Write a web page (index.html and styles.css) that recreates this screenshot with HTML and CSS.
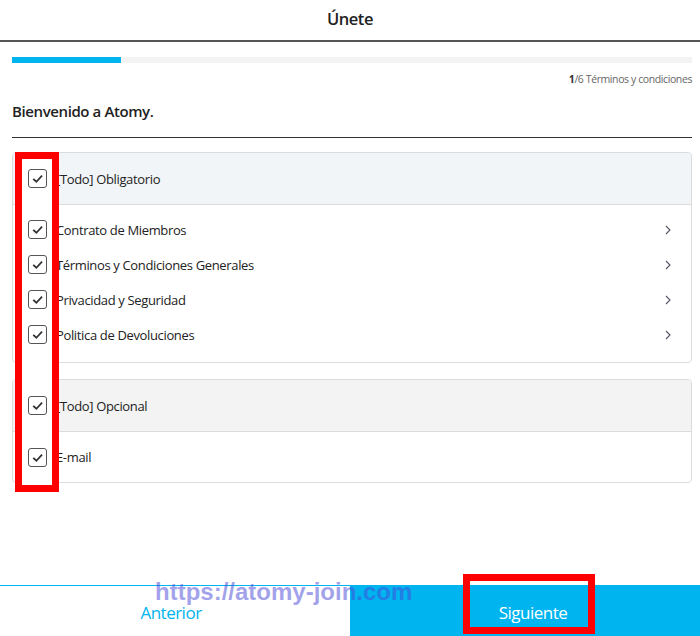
FILE: index.html
```html
<!DOCTYPE html>
<html lang="es">
<head>
<meta charset="UTF-8">
<meta name="viewport" content="width=device-width, initial-scale=1.0">
<title>Únete</title>
<link rel="stylesheet" href="styles.css">
</head>
<body>

<div class="page">
    <header class="top-bar">Únete</header>

    <div class="content">
        <div class="progress">
            <div class="progress-fill"></div>
        </div>
        <div class="step"><b>1</b>/6 Términos y condiciones</div>

        <h1 class="welcome">Bienvenido a Atomy.</h1>

        <div class="terms">
            <div class="mark-box"></div>

            <div class="card">
                <div class="card-head head-blue">
                    <span class="check"><svg viewBox="0 0 12 12"><path d="M3 6.2 L5.2 8.3 L9.2 4"/></svg></span>
                    <span>[Todo] Obligatorio</span>
                </div>
                <ul class="card-body">
                    <li>
                        <span class="check"><svg viewBox="0 0 12 12"><path d="M3 6.2 L5.2 8.3 L9.2 4"/></svg></span>
                        <span class="label">Contrato de Miembros</span>
                        <svg class="chevron" viewBox="0 0 6 10"><path d="M1 1 L5 5 L1 9"/></svg>
                    </li>
                    <li>
                        <span class="check"><svg viewBox="0 0 12 12"><path d="M3 6.2 L5.2 8.3 L9.2 4"/></svg></span>
                        <span class="label">Términos y Condiciones Generales</span>
                        <svg class="chevron" viewBox="0 0 6 10"><path d="M1 1 L5 5 L1 9"/></svg>
                    </li>
                    <li>
                        <span class="check"><svg viewBox="0 0 12 12"><path d="M3 6.2 L5.2 8.3 L9.2 4"/></svg></span>
                        <span class="label">Privacidad y Seguridad</span>
                        <svg class="chevron" viewBox="0 0 6 10"><path d="M1 1 L5 5 L1 9"/></svg>
                    </li>
                    <li>
                        <span class="check"><svg viewBox="0 0 12 12"><path d="M3 6.2 L5.2 8.3 L9.2 4"/></svg></span>
                        <span class="label">Politica de Devoluciones</span>
                        <svg class="chevron" viewBox="0 0 6 10"><path d="M1 1 L5 5 L1 9"/></svg>
                    </li>
                </ul>
            </div>

            <div class="card">
                <div class="card-head head-grey">
                    <span class="check"><svg viewBox="0 0 12 12"><path d="M3 6.2 L5.2 8.3 L9.2 4"/></svg></span>
                    <span>[Todo] Opcional</span>
                </div>
                <ul class="card-body single">
                    <li>
                        <span class="check"><svg viewBox="0 0 12 12"><path d="M3 6.2 L5.2 8.3 L9.2 4"/></svg></span>
                        <span class="label">E-mail</span>
                    </li>
                </ul>
            </div>
        </div>
    </div>

    <footer class="bottom-bar">
        <button class="btn-prev" type="button">Anterior</button>
        <button class="btn-next" type="button">Siguiente</button>
        <div class="watermark">https://atomy-join.com</div>
        <div class="mark-btn"></div>
    </footer>
</div>

</body>
</html>
```

FILE: styles.css
```css
body {
    margin: 0;
    padding: 0;
    background: #fff;
    font-family: 'Open Sans', 'Noto Sans', sans-serif;
    color: #222;
}

.page {
    width: 700px;
    height: 636px;
    display: flex;
    flex-direction: column;
    position: relative;
    overflow: hidden;
}

.top-bar {
    height: 40px;
    line-height: 38px;
    text-align: center;
    font-size: 16.5px;
    font-weight: 600;
    letter-spacing: -0.5px;
    color: #222;
    border-bottom: 2px solid #555;
}

.content {
    flex: 1;
    padding: 15px 8px 0 12px;
}

.progress {
    height: 6px;
    background-color: #f3f3f3;
}

.progress-fill {
    width: 109px;
    height: 100%;
    background-color: #00b4ef;
}

.step {
    text-align: right;
    font-size: 10.5px;
    letter-spacing: -0.4px;
    color: #666;
    margin-top: 9px;
}

.step b {
    color: #333;
}

.welcome {
    margin: 15px 0 0;
    padding-bottom: 16px;
    font-size: 15px;
    font-weight: 600;
    letter-spacing: -0.4px;
    color: #222;
    border-bottom: 1.5px solid #333;
}

.terms {
    position: relative;
    margin-top: 14px;
    display: flex;
    flex-direction: column;
    gap: 16px;
}

.card {
    border: 1px solid #dcdcdc;
    border-radius: 4px;
    overflow: hidden;
}

.card-head {
    height: 51px;
    display: flex;
    align-items: center;
    font-size: 13px;
    letter-spacing: -0.35px;
    color: #222;
    border-bottom: 1px solid #dcdcdc;
}

.head-blue {
    background-color: #f2f5f8;
}

.head-grey {
    background-color: #f3f3f3;
}

.card-body {
    list-style: none;
    margin: 0;
    padding: 7px 0 10px;
}

.card-body li {
    height: 35px;
    display: flex;
    align-items: center;
    font-size: 13px;
    letter-spacing: -0.35px;
    color: #222;
}

.card-body.single {
    padding: 0;
}

.card-body.single li {
    height: 50px;
}

.label {
    flex: 1;
}

.check {
    position: relative;
    z-index: 2;
    width: 17px;
    height: 17px;
    margin: 0 9px 0 15px;
    border: 1.5px solid #555;
    border-radius: 3px;
    background: #fff;
    display: flex;
    align-items: center;
    justify-content: center;
    flex-shrink: 0;
}

.check svg {
    width: 17px;
    height: 17px;
    fill: none;
    stroke: #333;
    stroke-width: 1.25;
}

.chevron {
    width: 6px;
    height: 10px;
    margin-right: 20px;
    fill: none;
    stroke: #556;
    stroke-width: 1.1;
}

.mark-box {
    position: absolute;
    z-index: 1;
    left: 3px;
    top: 0;
    width: 30px;
    height: 326px;
    border: 7px solid #ff0000;
    background: #fff;
}

.bottom-bar {
    height: 50px;
    display: flex;
    position: relative;
    border-top: 1px solid #00b4ef;
}

.bottom-bar button {
    flex: 0 0 50%;
    box-sizing: border-box;
    border: none;
    font-family: 'Open Sans', 'Noto Sans', sans-serif;
    font-size: 17px;
    line-height: 17px;
    letter-spacing: -0.5px;
    padding-top: 4px;
}

.btn-prev {
    background: #fff;
    color: #00b4ef;
    padding-right: 14px;
}

.btn-next {
    background: #00b4ef;
    color: #fff;
    padding-left: 22px;
}

.watermark {
    position: absolute;
    left: 155px;
    top: -5px;
    font-family: 'Liberation Sans', Arial, sans-serif;
    font-size: 24px;
    line-height: 21px;
    font-weight: bold;
    color: rgba(70, 70, 215, 0.5);
}

.mark-btn {
    position: absolute;
    left: 463px;
    top: -12px;
    width: 118px;
    height: 46px;
    border: 7px solid #ff0000;
}
```
